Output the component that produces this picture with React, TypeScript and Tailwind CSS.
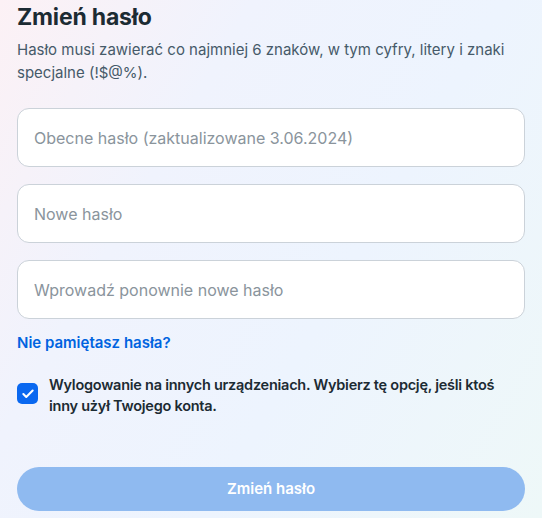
import { Check } from "lucide-react";

const FIELDS = [
  "Obecne hasło (zaktualizowane 3.06.2024)",
  "Nowe hasło",
  "Wprowadź ponownie nowe hasło",
];

function PasswordField({ placeholder }: { placeholder: string }) {
  return (
    <input
      type="password"
      placeholder={placeholder}
      className="h-[59px] w-full rounded-[12px] border border-[#cbd2d9] bg-white px-4 text-[16px] text-[#1c2b33] outline-none placeholder:text-[#8a949c]"
    />
  );
}

export default function App() {
  return (
    <div
      className="min-h-[518px] w-full bg-[linear-gradient(120deg,#fcf1f5_0%,#f0f3fd_30%,#edf4fe_60%,#eef8f8_100%)] px-[17px] pt-[2px] pb-[8px]"
      style={{ fontFamily: "Inter, 'Noto Sans', sans-serif" }}
    >
      <h1 className="text-[23px] font-bold leading-[30px] tracking-[-0.2px] text-[#1c2b33]">Zmień hasło</h1>
      <p className="mt-[6px] text-[15px] leading-[23px] text-[#465a69]">
        Hasło musi zawierać co najmniej 6 znaków, w tym cyfry, litery i znaki specjalne (!$@%).
      </p>

      <div className="mt-[24px] flex flex-col gap-[17px]">
        {FIELDS.map((f) => (
          <PasswordField key={f} placeholder={f} />
        ))}
      </div>

      <a href="#" className="mt-[13px] block text-[15px] font-semibold leading-[22px] text-[#0064e0]">
        Nie pamiętasz hasła?
      </a>

      <label className="mt-[20px] flex items-start gap-[11px]">
        <span className="mt-[9px] flex h-[21px] w-[21px] shrink-0 items-center justify-center rounded-[5px] bg-[#0a68f0]">
          <Check size={14} strokeWidth={3.5} className="text-white" />
        </span>
        <span className="text-[14.5px] font-semibold leading-[21px] tracking-[-0.25px] text-[#1c2b33]">
          Wylogowanie na innych urządzeniach. Wybierz tę opcję, jeśli ktoś inny użył Twojego konta.
        </span>
      </label>

      <button
        type="button"
        className="mt-[51px] h-[44px] w-full rounded-full bg-[#8fbaf0] text-[15px] font-semibold text-white"
      >
        Zmień hasło
      </button>
    </div>
  );
}
